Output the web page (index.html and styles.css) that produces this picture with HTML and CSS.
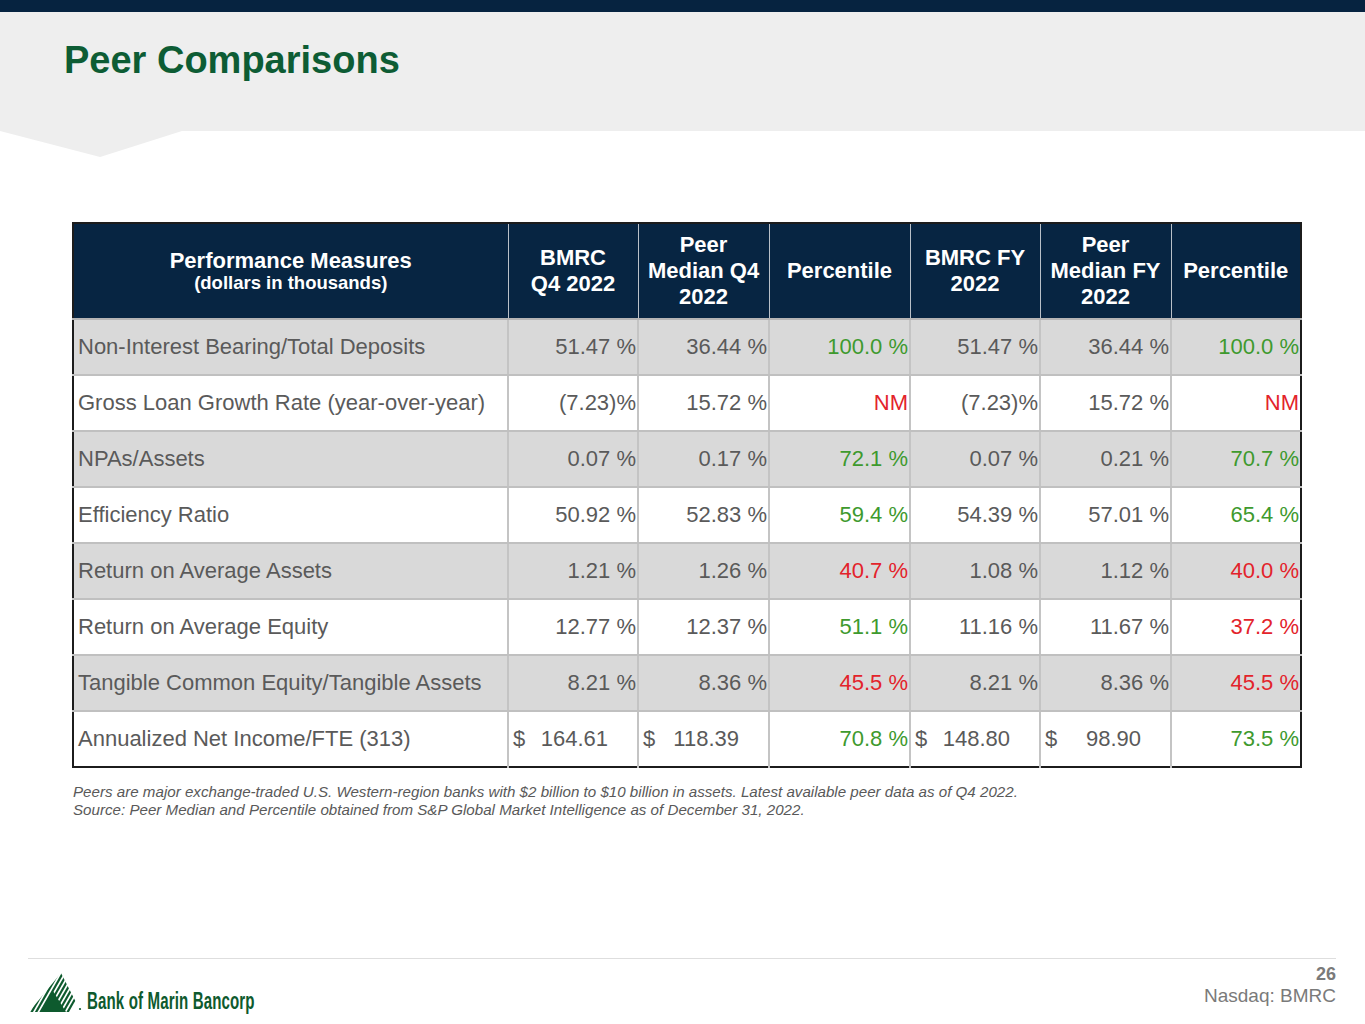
FILE: index.html
```html
<!DOCTYPE html>
<html lang="en">
<head>
<meta charset="utf-8">
<title>Peer Comparisons</title>
<link rel="stylesheet" href="styles.css">
</head>
<body>
<div class="slide">
  <div class="topbar"></div>
  <header class="band">
    <h1 class="title">Peer Comparisons</h1>
  </header>

  <main class="content">
    <table class="peer">
      <colgroup>
        <col class="c-label">
        <col class="c-val">
        <col class="c-val2">
        <col class="c-pct">
        <col class="c-val">
        <col class="c-val2">
        <col class="c-val">
      </colgroup>
      <thead>
        <tr>
          <th><span class="th-main">Performance Measures</span><span class="th-sub">(dollars in thousands)</span></th>
          <th>BMRC<br>Q4 2022</th>
          <th>Peer<br>Median Q4<br>2022</th>
          <th>Percentile</th>
          <th>BMRC FY<br>2022</th>
          <th>Peer<br>Median FY<br>2022</th>
          <th>Percentile</th>
        </tr>
      </thead>
      <tbody>
        <tr class="shade">
          <td class="label">Non-Interest Bearing/Total Deposits</td>
          <td class="num">51.47 %</td><td class="num">36.44 %</td><td class="num good">100.0 %</td>
          <td class="num">51.47 %</td><td class="num">36.44 %</td><td class="num good">100.0 %</td>
        </tr>
        <tr>
          <td class="label">Gross Loan Growth Rate (year-over-year)</td>
          <td class="num">(7.23)%</td><td class="num">15.72 %</td><td class="num bad">NM</td>
          <td class="num">(7.23)%</td><td class="num">15.72 %</td><td class="num bad">NM</td>
        </tr>
        <tr class="shade">
          <td class="label">NPAs/Assets</td>
          <td class="num">0.07 %</td><td class="num">0.17 %</td><td class="num good">72.1 %</td>
          <td class="num">0.07 %</td><td class="num">0.21 %</td><td class="num good">70.7 %</td>
        </tr>
        <tr>
          <td class="label">Efficiency Ratio</td>
          <td class="num">50.92 %</td><td class="num">52.83 %</td><td class="num good">59.4 %</td>
          <td class="num">54.39 %</td><td class="num">57.01 %</td><td class="num good">65.4 %</td>
        </tr>
        <tr class="shade">
          <td class="label">Return on Average Assets</td>
          <td class="num">1.21 %</td><td class="num">1.26 %</td><td class="num bad">40.7 %</td>
          <td class="num">1.08 %</td><td class="num">1.12 %</td><td class="num bad">40.0 %</td>
        </tr>
        <tr>
          <td class="label">Return on Average Equity</td>
          <td class="num">12.77 %</td><td class="num">12.37 %</td><td class="num good">51.1 %</td>
          <td class="num">11.16 %</td><td class="num">11.67 %</td><td class="num bad">37.2 %</td>
        </tr>
        <tr class="shade">
          <td class="label">Tangible Common Equity/Tangible Assets</td>
          <td class="num">8.21 %</td><td class="num">8.36 %</td><td class="num bad">45.5 %</td>
          <td class="num">8.21 %</td><td class="num">8.36 %</td><td class="num bad">45.5 %</td>
        </tr>
        <tr>
          <td class="label">Annualized Net Income/FTE (313)</td>
          <td class="num dollar"><span class="cur">$</span>164.61</td>
          <td class="num dollar"><span class="cur">$</span>118.39</td>
          <td class="num good">70.8 %</td>
          <td class="num dollar"><span class="cur">$</span>148.80</td>
          <td class="num dollar"><span class="cur">$</span>98.90</td>
          <td class="num good">73.5 %</td>
        </tr>
      </tbody>
    </table>

    <p class="note">Peers are major exchange-traded U.S. Western-region banks with $2 billion to $10 billion in assets. Latest available peer data as of Q4 2022.<br>Source: Peer Median and Percentile obtained from S&amp;P Global Market Intelligence as of December 31, 2022.</p>
  </main>

  <footer class="footer">
    <div class="logo">
      <svg class="logo-mark" width="54" height="42" viewBox="0 0 54 42" aria-hidden="true">
        <defs>
          <clipPath id="mtn">
            <polygon points="1,40 33,1 53,40"/>
          </clipPath>
        </defs>
        <g clip-path="url(#mtn)" stroke="#0e5a2e" stroke-width="2.2">
          <line x1="-20" y1="42" x2="4" y2="0"/>
          <line x1="-15.5" y1="42" x2="8.5" y2="0"/>
          <line x1="-11" y1="42" x2="13" y2="0"/>
          <line x1="-6.5" y1="42" x2="17.5" y2="0"/>
          <line x1="-2" y1="42" x2="22" y2="0"/>
          <line x1="2.5" y1="42" x2="26.5" y2="0"/>
          <line x1="7" y1="42" x2="31" y2="0"/>
          <line x1="11.5" y1="42" x2="35.5" y2="0"/>
          <line x1="16" y1="42" x2="40" y2="0"/>
          <line x1="20.5" y1="42" x2="44.5" y2="0"/>
          <line x1="25" y1="42" x2="49" y2="0"/>
          <line x1="29.5" y1="42" x2="53.5" y2="0"/>
          <line x1="34" y1="42" x2="58" y2="0"/>
          <line x1="38.5" y1="42" x2="62.5" y2="0"/>
        </g>
        <polygon points="12,40 25,19 38,40" fill="#0e5a2e"/>
        <circle cx="52" cy="37" r="1.1" fill="#0e5a2e"/>
      </svg>
      <span class="logo-text">Bank of Marin Bancorp</span>
    </div>
    <div class="pageinfo">
      <div class="pagenum">26</div>
      <div class="ticker">Nasdaq: BMRC</div>
    </div>
  </footer>
</div>
</body>
</html>
```

FILE: styles.css
```css
* { box-sizing: border-box; }

html, body {
  margin: 0;
  padding: 0;
  background: #ffffff;
}

body {
  font-family: "Liberation Sans", Arial, sans-serif;
}

.slide {
  width: 1365px;
  height: 1024px;
  display: flex;
  flex-direction: column;
  overflow: hidden;
}

.topbar {
  height: 12px;
  background: #062340;
  flex: none;
}

.band {
  position: relative;
  height: 119px;
  background: #eeeeee;
  flex: none;
  padding-left: 64px;
  padding-top: 26px;
}

.band::after {
  content: "";
  position: absolute;
  left: 0;
  top: 100%;
  width: 182px;
  height: 26px;
  background: #eeeeee;
  clip-path: polygon(0 0, 100% 0, 55% 100%);
}

.title {
  margin: 0;
  font-size: 38px;
  line-height: 44px;
  font-weight: bold;
  color: #0d5c34;
}

.content {
  padding-top: 91px;
  padding-left: 72px;
  flex: none;
}

.peer {
  border-collapse: collapse;
  table-layout: fixed;
  width: 1228px;
  border: 2px solid #1c1c1c;
}

.c-label { width: 435px; }
.c-val { width: 130px; }
.c-val2 { width: 131px; }
.c-pct { width: 141px; }

.peer th {
  height: 96px;
  background: #072542;
  color: #ffffff;
  font-size: 22px;
  line-height: 26px;
  font-weight: bold;
  text-align: center;
  vertical-align: middle;
  padding: 0 2px;
  border-left: 1px solid #b9c0c8;
  border-bottom: 2px solid #b5b5b5;
}

.peer th:first-child { border-left: none; }

.th-main { display: block; font-size: 22px; line-height: 22px; }
.th-sub { display: block; font-size: 18.5px; line-height: 21px; }

.peer td {
  height: 56px;
  font-size: 22px;
  color: #5a5a5a;
  vertical-align: middle;
  border-left: 2px solid #c4c4c4;
  border-bottom: 2px solid #c0c0c0;
  white-space: nowrap;
  background: #ffffff;
}

.peer td:first-child { border-left: none; }

.peer tr.shade td { background: #d9d9d9; }

.peer tbody tr:last-child td { border-bottom: none; }

.label {
  padding: 0 4px;
  text-align: left;
}

.num {
  text-align: right;
  padding: 0 1px 0 4px;
}

.dollar {
  padding-right: 29px;
}

.cur {
  float: left;
}

.good { color: #3e9a2e !important; }
.bad { color: #e3232b !important; }

.note {
  margin: 15px 0 0 1px;
  font-size: 15.15px;
  line-height: 18px;
  font-style: italic;
  color: #595959;
}

.footer {
  margin: auto 29px 0 28px;
  border-top: 1px solid #dedede;
  height: 66px;
  display: flex;
  justify-content: space-between;
  align-items: flex-start;
  flex: none;
}

.logo {
  display: flex;
  align-items: flex-end;
  padding-top: 13px;
}

.logo-mark {
  display: block;
  flex: none;
}

.logo-text {
  display: inline-block;
  font-size: 23px;
  line-height: 24px;
  font-weight: bold;
  color: #0e5a2e;
  transform: scaleX(0.655);
  transform-origin: left bottom;
  margin-left: 5px;
  margin-bottom: 1px;
  letter-spacing: 0.2px;
  white-space: nowrap;
}

.pageinfo {
  text-align: right;
  color: #7a7a7a;
  padding-top: 4px;
}

.pagenum {
  font-size: 18px;
  line-height: 22px;
  font-weight: bold;
}

.ticker {
  font-size: 19px;
  line-height: 22px;
}
```
